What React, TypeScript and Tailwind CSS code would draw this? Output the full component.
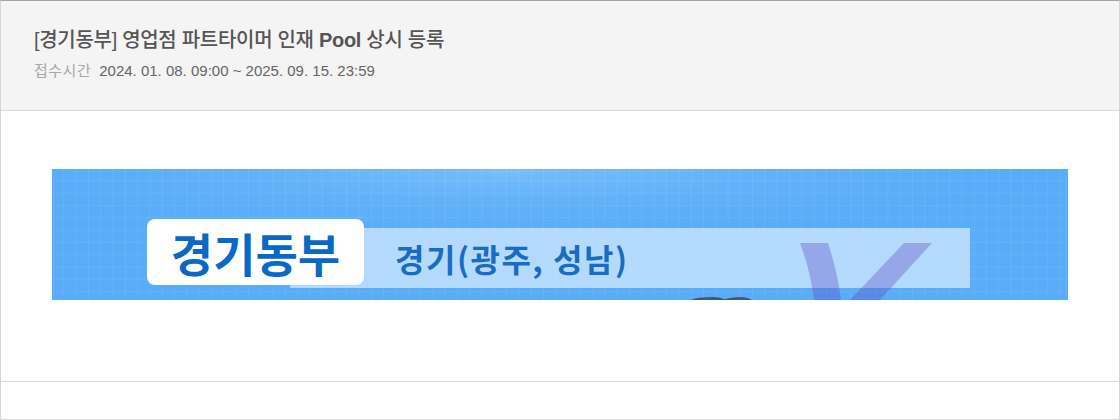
import React from 'react';

const Banner = () => {
    return (
        <div className="relative h-[131px] w-[1016px] overflow-hidden bg-[#58acf8]">
            {/* grid texture of the banner image */}
            <svg className="absolute inset-0" width="1016" height="131">
                <defs>
                    <radialGradient id="glow" cx="0.45" cy="0" r="0.6">
                        <stop offset="0" stopColor="#86c6fb" stopOpacity="0.7" />
                        <stop offset="1" stopColor="#58acf8" stopOpacity="0" />
                    </radialGradient>
                    <pattern id="grid" width="12.3" height="12.3" patternUnits="userSpaceOnUse">
                        <path d="M12.3 0V12.3M0 12.3H12.3" stroke="#ffffff" strokeOpacity="0.1" strokeWidth="1.4" fill="none" />
                    </pattern>
                </defs>
                <rect width="1016" height="131" fill="url(#glow)" />
                <rect width="1016" height="131" fill="url(#grid)" />
            </svg>

            {/* light strip */}
            <div className="absolute left-[238px] top-[59px] h-[60px] w-[680px] bg-[#c3e2fd]/85" />

            {/* large letter in the background */}
            <svg className="absolute left-0 top-0" width="1016" height="131">
                <path d="M748 74 L776 74 Q786 105 789 131 L762 131 Q758 100 748 74 Z" fill="#5a46c4" fillOpacity="0.34" />
                <path d="M852 74 L880 74 L828 131 L798 131 Z" fill="#5a46c4" fillOpacity="0.34" />
                <path d="M638 131 Q646 128 660 128 Q670 128 673 131 Z M670 131 Q678 128 690 128 Q697 129 700 131 Z" fill="#3b4350" fillOpacity="0.8" />
            </svg>

            {/* white tag */}
            <div className="absolute left-[95px] top-[50px] flex h-[66px] w-[217px] items-center justify-center rounded-[8px] bg-white">
                <span className="font-['Noto_Sans_CJK_KR',sans-serif] text-[46px] font-bold leading-none text-[#0a69c4]">경기동부</span>
            </div>
            <div className="absolute left-[343px] top-[59px] flex h-[60px] items-center">
                <span className="font-['Noto_Sans_CJK_KR',sans-serif] text-[32px] font-bold leading-none tracking-[1.5px] text-[#1a6cc3]">경기(광주, 성남)</span>
            </div>
        </div>
    );
};

const App = () => {
    return (
        <div className="h-[420px] w-[1120px] bg-white font-['Liberation_Sans','Noto_Sans_CJK_KR',sans-serif]">
            <div className="border-x border-t border-[#d6d6d6] border-t-[#a3a3a3]">
                {/* Header */}
                <div className="h-[110px] border-b border-[#d9d9d9] bg-[#f4f4f4] px-[33px] pt-[25px]">
                    <h1 className="text-[20px] font-medium leading-[28px] tracking-[-0.3px] text-[#555555]">
                        [경기동부] 영업점 파트타이머 인재 <span className="font-bold">Pool</span> 상시 등록
                    </h1>
                    <div className="mt-[7px] flex items-center gap-[8px] text-[15px] leading-[20px]">
                        <span className="tracking-[0.5px] text-[#a8a8a8]">접수시간</span>
                        <span className="text-[#666666]">2024. 01. 08. 09:00 ~ 2025. 09. 15. 23:59</span>
                    </div>
                </div>

                {/* Body */}
                <div className="h-[271px] border-b border-[#d9d9d9] px-[51px] pt-[58px]">
                    <Banner />
                </div>

                {/* Next row */}
                <div className="h-[38px] border-b border-[#d9d9d9]" />
            </div>
        </div>
    );
};

export default App;
